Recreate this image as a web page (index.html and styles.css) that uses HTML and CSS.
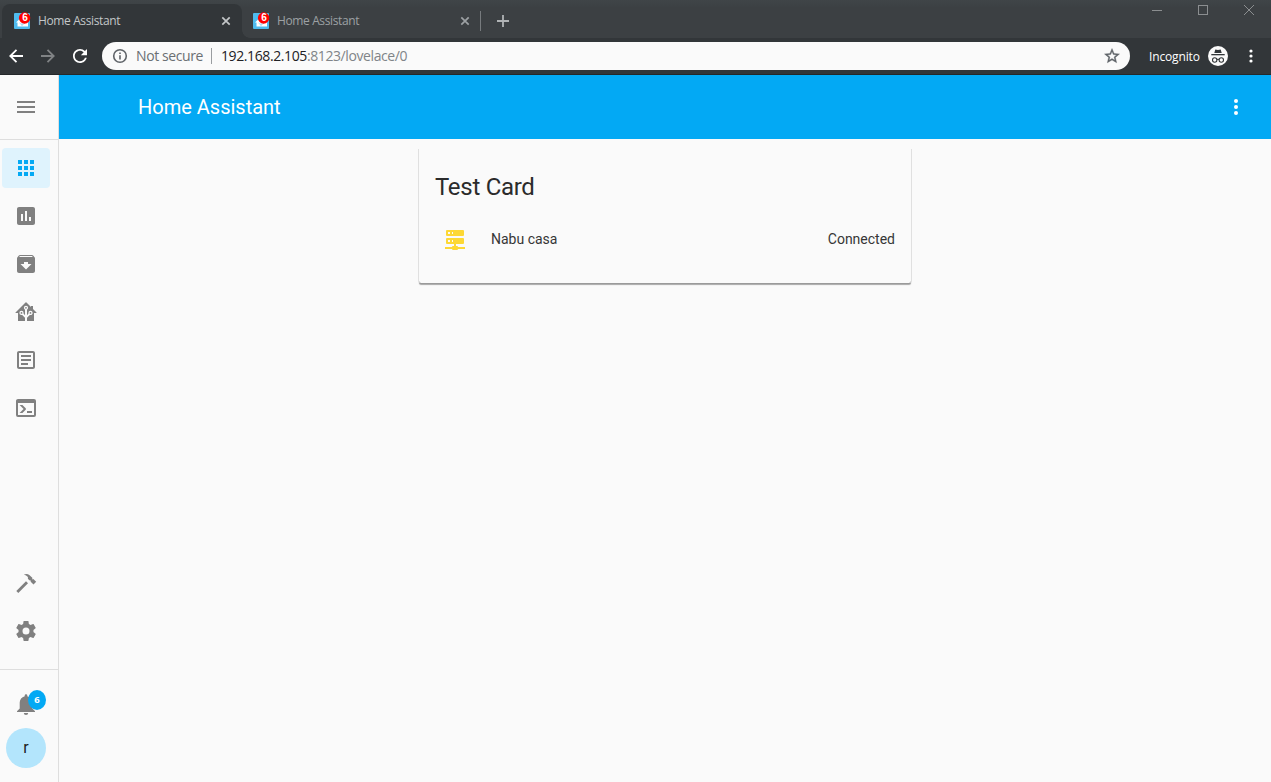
FILE: index.html
```html
<!DOCTYPE html>
<html lang="en">
<head>
<meta charset="utf-8">
<title>Home Assistant</title>
<link rel="stylesheet" href="styles.css">
</head>
<body>
<svg class="defs" width="0" height="0">
  <symbol id="favicon" viewBox="0 0 17 17">
    <rect y="1" width="16" height="16" rx="1" fill="#4fbbee"/>
    <path d="M2 10.500L8 4.500L14 10.500V14.500H3.500V10.500Z" fill="#fff"/>
    <path d="M8 8V15M8 13L5.500 11M8 13L11 11" stroke="#a8dcf5" stroke-width="1" fill="none"/>
    <circle cx="10.600" cy="6" r="5.700" fill="#f00"/>
  </symbol>
  <symbol id="close" viewBox="0 0 10 10"><path d="M1.300 1.300L8.700 8.700M8.700 1.300L1.300 8.700" stroke="currentColor" stroke-width="1.700"/></symbol>
</svg>

<header class="browser">
  <div class="tabstrip">
    <div class="tab tab-active">
      <span class="favicon"><svg width="17" height="17"><use href="#favicon"/></svg><b class="favicon-count">6</b></span>
      <span class="tab-title">Home Assistant</span>
      <svg class="tab-close" width="10" height="10"><use href="#close"/></svg>
    </div>
    <div class="tab tab-idle">
      <span class="favicon"><svg width="17" height="17"><use href="#favicon"/></svg><b class="favicon-count">6</b></span>
      <span class="tab-title">Home Assistant</span>
      <svg class="tab-close" width="10" height="10"><use href="#close"/></svg>
    </div>
    <svg class="new-tab" width="12" height="12" viewBox="0 0 12 12"><path d="M6 0V12M0 6H12" stroke="#b0b3b5" stroke-width="1.800"/></svg>
    <div class="window-controls">
      <svg width="10" height="10"><path d="M0 5.500H10" stroke="#8b8e90"/></svg>
      <svg width="10" height="10"><rect x=".5" y=".5" width="9" height="9" fill="none" stroke="#8b8e90"/></svg>
      <svg width="10" height="10"><path d="M0 0L10 10M10 0L0 10" stroke="#8b8e90"/></svg>
    </div>
  </div>
  <div class="toolbar">
    <svg class="nav" width="14" height="14" viewBox="0 0 14 14"><path d="M14 7H1.500M7.500 .8L1.300 7L7.500 13.200" fill="none" stroke="#fff" stroke-width="1.800"/></svg>
    <svg class="nav" width="14" height="14" viewBox="0 0 14 14"><path d="M0 7H12.500M6.500 .8L12.700 7L6.500 13.200" fill="none" stroke="#808385" stroke-width="1.800"/></svg>
    <svg class="nav" width="14" height="14" viewBox="4 4 16 16"><path fill="#fff" d="M17.650 6.350C16.200 4.900 14.210 4 12 4c-4.420 0-7.990 3.580-7.990 8s3.570 8 7.990 8c3.730 0 6.840-2.550 7.730-6h-2.080c-.82 2.330-3.040 4-5.650 4-3.310 0-6-2.690-6-6s2.690-6 6-6c1.660 0 3.140.69 4.220 1.780L13 11h7V4l-2.350 2.350z"/></svg>
    <div class="omnibox">
      <svg width="16" height="16" viewBox="0 0 16 16"><circle cx="8" cy="8" r="6.300" fill="none" stroke="#5f6368" stroke-width="1.600"/><path d="M8 7.200V11.500M8 4.500V6" stroke="#5f6368" stroke-width="1.600"/></svg>
      <span class="security">Not secure</span>
      <span class="divider"></span>
      <span class="url">192.168.2.105<span class="url-path">:8123/lovelace/0</span></span>
      <svg class="star" width="18" height="18" viewBox="0 0 24 24"><path fill="#5f6368" stroke="#5f6368" stroke-width=".5" d="M22 9.240l-7.190-.62L12 2 9.190 8.630 2 9.240l5.460 4.730L5.820 21 12 17.270 18.180 21l-1.630-7.030L22 9.240zM12 15.400l-3.760 2.270 1-4.280-3.320-2.880 4.380-.38L12 6.100l1.710 4.040 4.380.38-3.320 2.880 1 4.280L12 15.400z"/></svg>
    </div>
    <span class="incognito-label">Incognito</span>
    <svg class="incognito" width="20" height="20" viewBox="0 0 20 20"><circle cx="10" cy="10" r="10" fill="#fafafa"/><g fill="#323639"><path d="M7.300 3.500L10 4.100L12.700 3.500L13.700 7H6.300Z"/><rect x="3.300" y="8" width="13.400" height="1.300"/></g><g fill="none" stroke="#323639" stroke-width="1.100"><circle cx="6.700" cy="14" r="2.200"/><circle cx="13.300" cy="14" r="2.200"/><path d="M8.900 13.600Q10 13 11.100 13.600"/></g></svg>
    <svg class="browser-menu" width="4" height="14" viewBox="0 0 4 14" fill="#fff"><circle cx="2" cy="2" r="1.600"/><circle cx="2" cy="7" r="1.600"/><circle cx="2" cy="12" r="1.600"/></svg>
  </div>
</header>

<div class="app">
  <aside class="sidebar">
    <div class="menu"><svg class="icon" viewBox="0 0 24 24"><path d="M3 6h18v2H3zM3 11h18v2H3zM3 16h18v2H3z"/></svg></div>
    <nav class="panels">
      <a class="item item-active"><svg class="icon" viewBox="0 0 24 24"><path d="M4 4h4v4H4zM10 4h4v4h-4zM16 4h4v4h-4zM4 10h4v4H4zM10 10h4v4h-4zM16 10h4v4h-4zM4 16h4v4H4zM10 16h4v4h-4zM16 16h4v4h-4z"/></svg></a>
      <a class="item"><svg class="icon" viewBox="0 0 24 24"><path d="M19 3H5c-1.100 0-2 .9-2 2v14c0 1.100.9 2 2 2h14c1.100 0 2-.9 2-2V5c0-1.100-.9-2-2-2zM9 17H7v-7h2v7zm4 0h-2V7h2v10zm4 0h-2v-4h2v4z"/></svg></a>
      <a class="item"><svg class="icon" viewBox="0 0 24 24"><path d="M20.540 5.230l-1.390-1.680C18.880 3.210 18.470 3 18 3H6c-.47 0-.88.21-1.160.55L3.460 5.230C3.170 5.570 3 6.020 3 6.500V19c0 1.100.9 2 2 2h14c1.100 0 2-.9 2-2V6.500c0-.48-.17-.93-.46-1.270zM12 17.500L6.500 12H10v-2h4v2h3.500L12 17.500zM5.120 5l.81-1h12l.94 1H5.120z"/></svg></a>
      <a class="item"><svg class="icon" viewBox="0 0 24 24"><path d="M21.800,13H20V21H13V17.670L15.790,14.880L16.500,15C17.660,15 18.600,14.060 18.600,12.900C18.600,11.740 17.660,10.800 16.500,10.800A2.100,2.100 0 0,0 14.400,12.900L14.500,13.610L13,15.130V9.650C13.660,9.290 14.100,8.600 14.100,7.800A2.100,2.100 0 0,0 12,5.700A2.100,2.100 0 0,0 9.900,7.800C9.900,8.600 10.340,9.290 11,9.650V15.130L9.500,13.610L9.600,12.900A2.100,2.100 0 0,0 7.500,10.800A2.100,2.100 0 0,0 5.400,12.900A2.100,2.100 0 0,0 7.500,15L8.210,14.880L11,17.670V21H4V13H2.250C1.830,13 1.420,13 1.420,12.790C1.430,12.570 1.850,12.150 2.280,11.720L11,3C11.330,2.670 11.670,2.330 12,2.330C12.330,2.330 12.670,2.670 13,3L17,7V6H19V9L21.780,11.780C22.180,12.180 22.590,12.590 22.600,12.800C22.600,13 22.200,13 21.800,13M7.500,12A0.900,0.900 0 0,1 8.400,12.900A0.900,0.900 0 0,1 7.500,13.800A0.900,0.900 0 0,1 6.600,12.900A0.900,0.900 0 0,1 7.500,12M16.500,12C17,12 17.400,12.400 17.400,12.900C17.400,13.400 17,13.800 16.500,13.800A0.900,0.900 0 0,1 15.600,12.900A0.900,0.900 0 0,1 16.500,12M12,6.900C12.500,6.900 12.900,7.300 12.900,7.800C12.900,8.300 12.500,8.700 12,8.700C11.500,8.700 11.100,8.300 11.100,7.800C11.100,7.300 11.500,6.900 12,6.900Z"/></svg></a>
      <a class="item"><svg class="icon" viewBox="0 0 24 24"><path d="M19 5v14H5V5h14m0-2H5c-1.100 0-2 .9-2 2v14c0 1.100.9 2 2 2h14c1.100 0 2-.9 2-2V5c0-1.100-.9-2-2-2zM14 17H7v-2h7v2zm3-4H7v-2h10v2zm0-4H7V7h10v2z"/></svg></a>
      <a class="item"><svg class="icon" viewBox="0 0 24 24"><path d="M20,19V7H4V19H20M20,3A2,2 0 0,1 22,5V19A2,2 0 0,1 20,21H4A2,2 0 0,1 2,19V5C2,3.890 2.900,3 4,3H20M13,17V15H18V17H13M9.580,13L5.570,9H8.400L11.700,12.300C12.090,12.690 12.090,13.330 11.700,13.720L8.420,17H5.590L9.580,13Z"/></svg></a>
    </nav>
    <nav class="tools">
      <a class="item"><svg class="icon" viewBox="0 0 24 24"><path d="M2.300 20L12 10.300L14 12.300L4.300 22ZM9.800 3.800C11.500 2.600 13.800 2.700 15.300 4L18.300 6.800V8.400L19.300 8.100L22.200 10.800L19.500 13.400L16.700 10.700V9.500L15.300 9.200L13.900 7.800V6C12.800 4.900 11.500 4.200 9.800 3.800Z"/></svg></a>
      <a class="item"><svg class="icon" viewBox="0 0 24 24"><path d="M12,15.500A3.500,3.500 0 0,1 8.500,12A3.500,3.500 0 0,1 12,8.500A3.500,3.500 0 0,1 15.500,12A3.500,3.500 0 0,1 12,15.500M19.430,12.970C19.470,12.650 19.500,12.330 19.500,12C19.500,11.670 19.470,11.340 19.430,11L21.540,9.370C21.730,9.220 21.780,8.950 21.660,8.730L19.660,5.270C19.540,5.050 19.270,4.960 19.050,5.050L16.560,6.050C16.040,5.660 15.500,5.320 14.870,5.070L14.500,2.420C14.460,2.180 14.250,2 14,2H10C9.750,2 9.540,2.180 9.500,2.420L9.130,5.070C8.500,5.320 7.960,5.660 7.440,6.050L4.950,5.050C4.730,4.960 4.460,5.050 4.340,5.270L2.340,8.730C2.210,8.950 2.270,9.220 2.460,9.370L4.570,11C4.530,11.340 4.500,11.670 4.500,12C4.500,12.330 4.530,12.650 4.570,12.970L2.460,14.630C2.270,14.780 2.210,15.050 2.340,15.270L4.340,18.730C4.460,18.950 4.730,19.030 4.950,18.950L7.440,17.940C7.960,18.340 8.500,18.680 9.130,18.930L9.500,21.580C9.540,21.820 9.750,22 10,22H14C14.250,22 14.460,21.820 14.500,21.580L14.870,18.930C15.500,18.670 16.040,18.340 16.560,17.940L19.050,18.950C19.270,19.030 19.540,18.950 19.660,18.730L21.660,15.270C21.780,15.050 21.730,14.780 21.540,14.630L19.430,12.970Z"/></svg></a>
    </nav>
    <div class="account">
      <a class="bell"><svg class="icon" viewBox="0 0 24 24"><path d="M14.200,21A2.200,2 0 0,1 9.800,21ZM12,2.200A1.300,1.300 0 0,1 13.300,3.500V4.200C16.300,5 18.300,7.500 18.300,10.500V16.500L21,19.200V20H3V19.200L5.700,16.500V10.500C5.700,7.500 7.700,5 10.700,4.200V3.500A1.300,1.300 0 0,1 12,2.200Z"/></svg><span class="badge">6</span></a>
      <a class="avatar">r</a>
    </div>
  </aside>
  <main class="main">
    <div class="appbar">
      <h1 class="app-title">Home Assistant</h1>
      <svg class="icon app-menu" viewBox="0 0 24 24"><circle cx="12" cy="6" r="2"/><circle cx="12" cy="12" r="2"/><circle cx="12" cy="18" r="2"/></svg>
    </div>
    <div class="view">
      <section class="card">
        <h2 class="card-title">Test Card</h2>
        <div class="entity">
          <span class="entity-icon"><svg class="icon" viewBox="0 0 24 24"><path d="M13,19H14A1,1 0 0,1 15,20H22V22H15A1,1 0 0,1 14,23H10A1,1 0 0,1 9,22H2V20H9A1,1 0 0,1 10,19H11V17H4A1,1 0 0,1 3,16V12A1,1 0 0,1 4,11H20A1,1 0 0,1 21,12V16A1,1 0 0,1 20,17H13V19M4,3H20A1,1 0 0,1 21,4V8A1,1 0 0,1 20,9H4A1,1 0 0,1 3,8V4A1,1 0 0,1 4,3M9,7H10V5H9V7M9,15H10V13H9V15M5,5V7H7V5H5M5,13V15H7V13H5Z"/></svg></span>
          <span class="entity-name">Nabu casa</span>
          <span class="entity-state">Connected</span>
        </div>
      </section>
    </div>
  </main>
</div>
</body>
</html>
```
FILE: styles.css
```css
* { box-sizing: border-box; }
body {
  margin: 0;
  height: 782px;
  overflow: hidden;
  display: flex;
  flex-direction: column;
  background: #fafafa;
  font-family: Roboto, "Noto Sans", sans-serif;
  color: #212121;
}
svg { display: block; flex: none; }
.defs { position: absolute; }

/* Browser frame */
.browser {
  height: 75px;
  flex: none;
  background: #323639;
  border-bottom: 1px solid #25282a;
  font-family: "Open Sans", "Noto Sans", sans-serif;
}
.tabstrip {
  height: 38px;
  display: flex;
  background: linear-gradient(#404548, #3c4043 8px);
}
.tab {
  display: flex;
  align-items: center;
  height: 34px;
  margin-top: 4px;
  color: #9da1a4;
}
.tab-active {
  width: 240px;
  margin-left: 2px;
  padding: 0 11px 0 12px;
  background: #323639;
  border-radius: 8px 8px 0 0;
  color: #c3c6c8;
}
.tab-idle {
  width: 239px;
  padding: 0 11px;
  position: relative;
}
.tab-idle::before {
  content: "";
  position: absolute;
  left: 0;
  bottom: 0;
  width: 8px;
  height: 8px;
  background: radial-gradient(circle at 100% 0, transparent 7.5px, #323639 8px);
}
.tab-idle::after {
  content: "";
  position: absolute;
  right: 0;
  top: 7px;
  width: 1px;
  height: 20px;
  background: #777b7e;
}
.favicon { position: relative; width: 17px; height: 17px; margin-top: -2px; }
.favicon-count {
  position: absolute;
  left: 7px;
  top: 0;
  width: 8px;
  color: #fff;
  font: bold 10px/11px "Liberation Sans", sans-serif;
  text-align: center;
}
.tab-title { font-size: 12px; line-height: 16px; margin-left: 7px; letter-spacing: -.38px; flex: 1; }
.new-tab { margin: 15px 0 0 16px; }
.window-controls { display: flex; gap: 36px; margin: 5px 17px 0 auto; }
.toolbar { height: 36px; display: flex; align-items: center; padding-left: 9px; }
.nav { margin-right: 18px; }
.nav:nth-child(3) { margin-right: 15px; }
.omnibox {
  width: 1028px;
  height: 28px;
  border-radius: 14px;
  background: #fafafa;
  display: flex;
  align-items: center;
  padding: 0 9px 0 10px;
  font-size: 14px;
  line-height: 20px;
}
.security { margin-left: 8px; color: #6b6f73; letter-spacing: -.4px; }
.divider { width: 1px; height: 16px; margin: 0 9px 0 8px; background: #9a9da0; }
.url { color: #202124; letter-spacing: -.4px; }
.url-path { color: #808488; }
.star { margin-left: auto; }
.incognito-label { margin-left: 19px; width: 59px; color: #fff; font-size: 12px; letter-spacing: -.15px; }
.browser-menu { margin-left: 21px; }

/* Application */
.app { flex: 1; display: flex; min-height: 0; }
.icon { width: 24px; height: 24px; fill: currentColor; }
.sidebar {
  width: 59px;
  border-right: 1px solid #dedede;
  display: flex;
  flex-direction: column;
  color: #808080;
}
.menu { height: 65px; padding: 20px 14px; border-bottom: 1px solid #dedede; }
.panels, .tools { display: flex; flex-direction: column; gap: 8px; padding: 8px 0 0 2px; }
.item {
  width: 48px;
  height: 40px;
  padding: 8px 12px;
  border-radius: 4px;
}
.item-active { background: #dff3fd; color: #03a9f4; }
.tools { margin-top: auto; padding: 0 0 18px 2px; }
.account { height: 113px; border-top: 1px solid #dedede; padding-top: 22px; }
.bell { display: block; position: relative; margin-left: 14px; width: 24px; }
.badge {
  position: absolute;
  left: 14px;
  top: -2px;
  width: 18px;
  height: 20px;
  border-radius: 50%;
  background: #03a9f4;
  color: #fff;
  font: bold 9.5px/20px "Open Sans", sans-serif;
  text-align: center;
}
.avatar {
  display: block;
  width: 40px;
  height: 40px;
  margin: 12px 0 0 6px;
  border-radius: 50%;
  background: #b3e5fc;
  color: #212121;
  font-size: 16px;
  line-height: 40px;
  text-align: center;
}
.main { flex: 1; }
.appbar {
  height: 64px;
  display: flex;
  align-items: center;
  padding: 0 23px 0 79px;
  background: #03a9f4;
  color: #fff;
}
.app-title { margin: 0; flex: 1; font-size: 20px; line-height: 24px; font-weight: 400; }
.view { padding: 10px 0 0 360px; }
.card {
  width: 492px;
  height: 134px;
  padding: 16px;
  border-radius: 0 0 2px 2px;
  box-shadow: -1px 0 0 #e0e0e0, 1px 0 0 #e0e0e0, 0 1px 0 #9a9a9a, 0 2px 1px #a8a8a8;
}
.card-title { margin: 0; font-size: 24px; line-height: 44px; font-weight: 400; letter-spacing: -.288px; color: #2b2b2b; }
.entity { display: flex; align-items: center; height: 40px; margin-top: 10px; font-size: 14px; line-height: 20px; color: #363636; }
.entity-icon { width: 56px; padding-left: 8px; color: #fdd835; }
.entity-name { flex: 1; }
```
